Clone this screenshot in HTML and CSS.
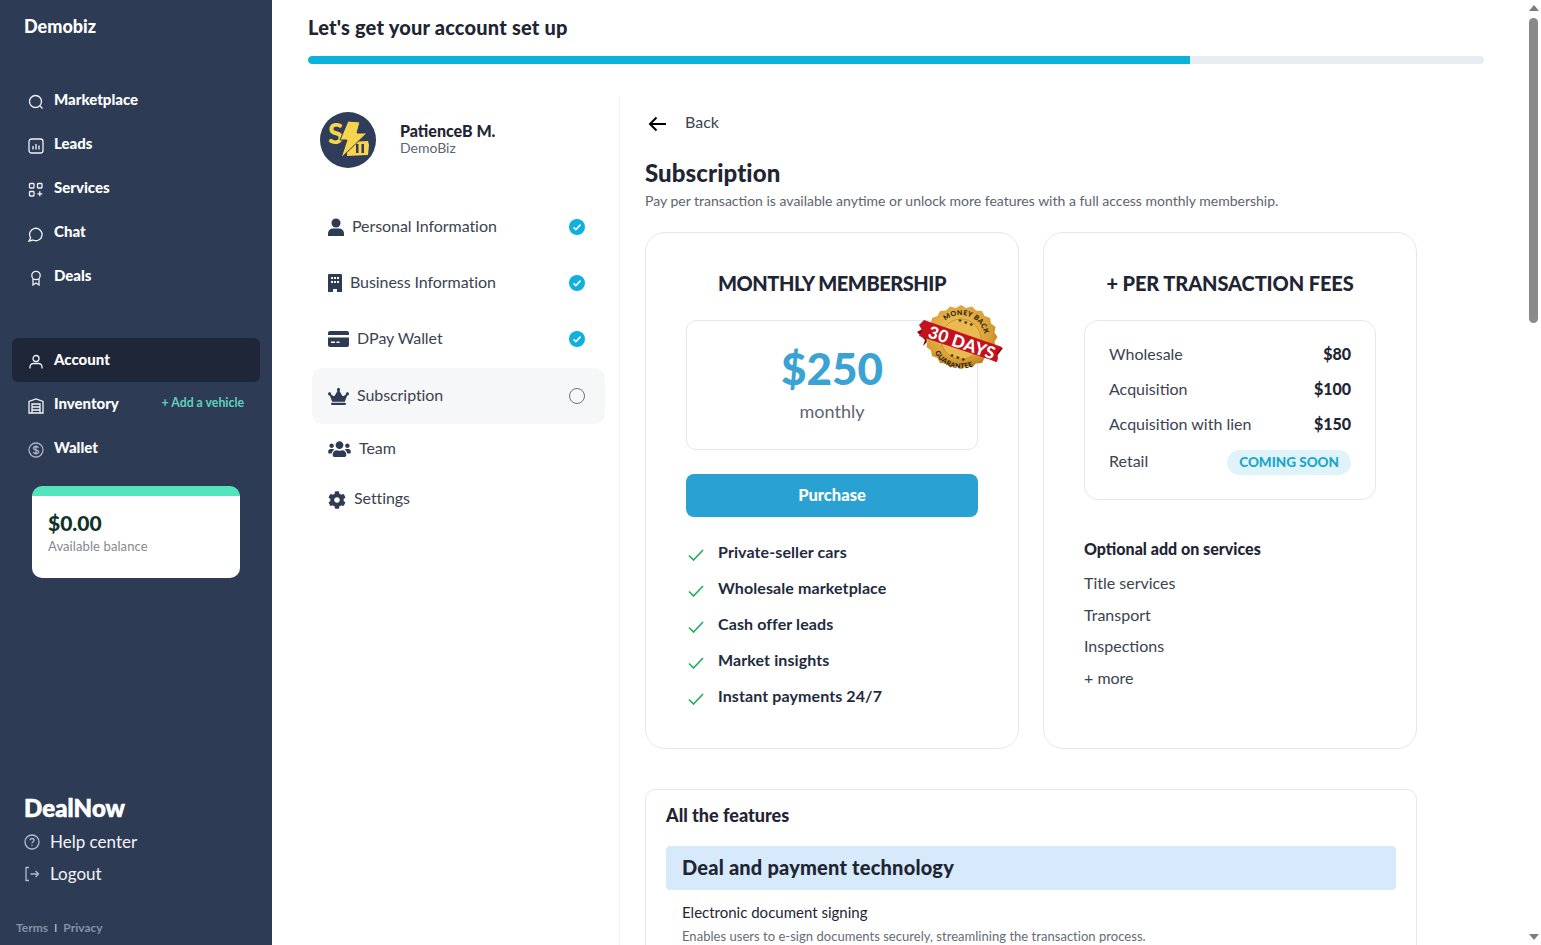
FILE: index.html
```html
<!DOCTYPE html>
<html lang="en">
<head>
<meta charset="utf-8">
<title>Demobiz - Subscription</title>
<link rel="stylesheet" href="styles.css">
</head>
<body>
<div class="app">
  <aside class="sidebar">
    <div class="brand">Demobiz</div>
    <nav class="nav nav-first">
      <a class="nav-row"><svg class="nav-icon" viewBox="0 0 16 16"><circle cx="7.5" cy="7.5" r="6"/><path d="M12 12l2.5 2.5"/></svg><span>Marketplace</span></a>
      <a class="nav-row"><svg class="nav-icon" viewBox="0 0 16 16"><rect x="1" y="1" width="14" height="14" rx="2.5"/><path d="M5 8v3.500M8 6v5.500M11 7.500v4"/></svg><span>Leads</span></a>
      <a class="nav-row"><svg class="nav-icon" viewBox="0 0 16 16"><rect x="1.500" y="1.500" width="4.500" height="4.500" rx=".8"/><rect x="9.500" y="1.500" width="4.500" height="4.500" rx=".8"/><rect x="1.500" y="9.500" width="4.500" height="4.500" rx=".8"/><path d="M11.800 9.300v5M9.300 11.800h5"/></svg><span>Services</span></a>
      <a class="nav-row"><svg class="nav-icon" viewBox="0 0 16 16"><path d="M1 15l1.600-3.200A6.200 6.200 0 1 1 5 14l-4 1z"/></svg><span>Chat</span></a>
      <a class="nav-row"><svg class="nav-icon" viewBox="0 0 16 16"><circle cx="8" cy="5.500" r="4.200"/><path d="M5 9v6l3-2 3 2V9"/></svg><span>Deals</span></a>
    </nav>
    <nav class="nav nav-second">
      <a class="nav-row nav-active"><svg class="nav-icon" viewBox="0 0 16 16"><circle cx="8" cy="4.500" r="3"/><path d="M2 14.500v-1.500a3.500 3.500 0 0 1 3.500-3.500h5A3.500 3.500 0 0 1 14 13v1.500"/></svg><span>Account</span></a>
      <a class="nav-row"><svg class="nav-icon" viewBox="0 0 16 16"><path d="M1 15V3.500L8 1l7 2.500V15zM4 15V6h8v9M4 9h8M4 12h8"/></svg><span>Inventory</span><span class="add-link">+ Add a vehicle</span></a>
      <a class="nav-row"><svg class="nav-icon nav-icon-muted" viewBox="0 0 16 16"><circle cx="8" cy="8" r="7"/><path d="M10.500 5.800C10 4.800 9 4.500 8 4.500c-1.400 0-2.500.7-2.500 1.800 0 2.600 5.200 1 5.200 3.500 0 1.100-1.200 1.800-2.700 1.800-1.200 0-2.300-.5-2.700-1.500M8 3.300v9.400"/></svg><span>Wallet</span></a>
    </nav>
    <section class="balance">
      <div class="balance-value">$0.00</div>
      <div class="balance-label">Available balance</div>
    </section>
    <footer class="side-foot">
      <div class="dealnow">DealNow</div>
      <a class="foot-row"><svg class="foot-icon" viewBox="0 0 16 16"><circle cx="8" cy="8" r="7"/><path d="M6 6.300C6.100 5.100 7 4.500 8 4.500c1.100 0 2 .7 2 1.800 0 1.500-2 1.500-2 3M8 10.800v.9"/></svg><span>Help center</span></a>
      <a class="foot-row"><svg class="foot-icon" viewBox="0 0 16 16"><path d="M5 1.500H2v13h3M6.500 8h8M11.500 5l3 3-3 3"/></svg><span>Logout</span></a>
      <div class="legal"><span>Terms</span><span class="legal-sep">I</span><span>Privacy</span></div>
    </footer>
  </aside>

  <main class="main">
    <h1 class="page-title">Let's get your account set up</h1>
    <div class="progress"><div class="progress-fill" style="width:75%"></div></div>

    <div class="columns">
      <div class="steps-col">
        <div class="profile">
          <svg class="avatar" viewBox="0 0 56 56" width="56" height="56">
            <circle cx="28" cy="28" r="28" fill="#2f3d5a"/>
            <path fill="#f7d44c" d="M27 30l21-1 1 4-1 10-21 1z"/>
            <path fill="#2f3d5a" d="M36 32h2.500v9H36zM41.500 32H44v9h-2.500z"/>
            <text x="8" y="32" class="avatar-s">S</text>
            <path fill="#f7d44c" stroke="#2f3d5a" stroke-width="1" d="M28 9l12 1-3 11h10L21 46l6-18h-7z"/>
          </svg>
          <div class="profile-text">
            <div class="profile-name">PatienceB M.</div>
            <div class="profile-org">DemoBiz</div>
          </div>
        </div>
        <ul class="steps">
          <li class="step">
            <svg class="step-icon" width="16" height="20" viewBox="0 0 16 20"><circle cx="8" cy="6" r="4.500"/><path d="M0 19v-2.500C0 13.500 2.500 11.500 5 11.500h6c2.500 0 5 2 5 5V19z"/></svg>
            <span>Personal Information</span>
            <svg class="step-state" width="16" height="16" viewBox="0 0 16 16"><circle cx="8" cy="8" r="8" fill="#0fb0dc"/><path d="M4.500 8.300l2.400 2.300 4.600-5" fill="none" stroke="#fff" stroke-width="1.600"/></svg>
          </li>
          <li class="step">
            <svg class="step-icon" width="14" height="18" viewBox="0 0 14 18"><path fill-rule="evenodd" d="M1 0h12a1 1 0 0 1 1 1v17H9v-3H5v3H0V1a1 1 0 0 1 1-1zM3 3v2h2V3zM6 3v2h2V3zM9 3v2h2V3zM3 7v2h2V7zM6 7v2h2V7zM9 7v2h2V7z"/></svg>
            <span>Business Information</span>
            <svg class="step-state" width="16" height="16" viewBox="0 0 16 16"><circle cx="8" cy="8" r="8" fill="#0fb0dc"/><path d="M4.500 8.300l2.400 2.300 4.600-5" fill="none" stroke="#fff" stroke-width="1.600"/></svg>
          </li>
          <li class="step">
            <svg class="step-icon" width="21" height="16" viewBox="0 0 21 16"><path fill-rule="evenodd" d="M2 0h17a2 2 0 0 1 2 2v2H0V2a2 2 0 0 1 2-2zM0 6.500h21V14a2 2 0 0 1-2 2H2a2 2 0 0 1-2-2zM3 10.500v1.500h4v-1.500zM8.500 10.500v1.500h3v-1.500z"/></svg>
            <span>DPay Wallet</span>
            <svg class="step-state" width="16" height="16" viewBox="0 0 16 16"><circle cx="8" cy="8" r="8" fill="#0fb0dc"/><path d="M4.500 8.300l2.400 2.300 4.600-5" fill="none" stroke="#fff" stroke-width="1.600"/></svg>
          </li>
          <li class="step step-current">
            <svg class="step-icon" width="21" height="17" viewBox="0 0 640 512"><path d="M528 448H112c-8.800 0-16 7.200-16 16v32c0 8.800 7.200 16 16 16h416c8.800 0 16-7.200 16-16v-32c0-8.800-7.200-16-16-16zm64-320c-26.500 0-48 21.500-48 48 0 7.100 1.600 13.700 4.400 19.800L476 239.200c-15.400 9.200-35.300 4-44.200-11.600L350.300 85C361 76.200 368 63 368 48c0-26.500-21.500-48-48-48s-48 21.500-48 48c0 15 7 28.200 17.700 37l-81.500 142.600c-8.900 15.600-28.900 20.800-44.200 11.600l-72.300-43.400c2.700-6 4.400-12.700 4.400-19.800 0-26.500-21.500-48-48-48S0 149.500 0 176s21.500 48 48 48c2.600 0 5.200-.4 7.700-.8L128 416h384l72.300-192.800c2.500.4 5.100.8 7.700.8 26.500 0 48-21.500 48-48s-21.500-48-48-48z"/></svg>
            <span>Subscription</span>
            <span class="step-open"></span>
          </li>
          <li class="step step-team">
            <svg class="step-icon" width="23" height="18" viewBox="0 0 640 512"><path d="M96 224c35.300 0 64-28.700 64-64s-28.700-64-64-64-64 28.700-64 64 28.700 64 64 64zm448 0c35.300 0 64-28.700 64-64s-28.700-64-64-64-64 28.700-64 64 28.700 64 64 64zm32 32h-64c-17.600 0-33.500 7.100-45.100 18.600 40.300 22.100 68.900 62 75.100 109.400h66c17.700 0 32-14.300 32-32v-32c0-35.300-28.700-64-64-64zm-256 0c61.900 0 112-50.100 112-112S381.900 32 320 32 208 82.100 208 144s50.100 112 112 112zm76.800 32h-8.300c-20.800 10-43.900 16-68.500 16s-47.600-6-68.500-16h-8.300C179.600 288 128 339.600 128 403.200V432c0 26.500 21.500 48 48 48h288c26.500 0 48-21.500 48-48v-28.800c0-63.600-51.600-115.200-115.200-115.200zm-223.700-13.400C161.500 263.100 145.600 256 128 256H64c-35.300 0-64 28.700-64 64v32c0 17.700 14.300 32 32 32h65.900c6.300-47.400 34.900-87.300 75.200-109.400z"/></svg>
            <span>Team</span>
          </li>
          <li class="step step-short">
            <svg class="step-icon" width="18" height="18" viewBox="0 0 512 512"><path d="M487.400 315.700l-42.600-24.600c4.300-23.200 4.300-47 0-70.200l42.600-24.600c4.900-2.800 7.100-8.600 5.500-14-11.100-35.600-30-67.800-54.700-94.600-3.800-4.100-10-5.100-14.800-2.300L380.800 110c-17.900-15.400-38.500-27.300-60.800-35.100V25.800c0-5.600-3.900-10.500-9.400-11.700-36.700-8.200-74.300-7.800-109.200 0-5.500 1.200-9.400 6.100-9.400 11.700V75c-22.200 7.900-42.800 19.800-60.800 35.100L88.700 85.500c-4.900-2.800-11-1.900-14.800 2.300-24.700 26.700-43.600 58.900-54.700 94.600-1.700 5.400.6 11.200 5.500 14L67.300 221c-4.300 23.200-4.300 47 0 70.200l-42.600 24.600c-4.900 2.800-7.100 8.600-5.500 14 11.100 35.600 30 67.800 54.700 94.600 3.800 4.100 10 5.100 14.800 2.300l42.600-24.600c17.900 15.400 38.500 27.300 60.800 35.100v49.200c0 5.600 3.900 10.500 9.400 11.700 36.700 8.200 74.300 7.800 109.200 0 5.500-1.200 9.400-6.100 9.400-11.700v-49.200c22.200-7.900 42.800-19.800 60.800-35.100l42.600 24.600c4.900 2.800 11 1.900 14.800-2.300 24.700-26.700 43.600-58.900 54.700-94.600 1.500-5.500-.7-11.300-5.600-14.100zM256 336c-44.100 0-80-35.900-80-80s35.900-80 80-80 80 35.900 80 80-35.900 80-80 80z"/></svg>
            <span>Settings</span>
          </li>
        </ul>
      </div>

      <div class="content-col">
        <a class="back"><svg class="back-icon" width="18" height="16" viewBox="0 0 18 16"><path d="M18 8H2M8.500 1.500L2 8l6.500 6.500" fill="none" stroke="#000" stroke-width="2"/></svg><span>Back</span></a>
        <h2 class="section-title">Subscription</h2>
        <p class="section-lead">Pay per transaction is available anytime or unlock more features with a full access monthly membership.</p>

        <div class="plans">
          <article class="plan">
            <h3 class="plan-title plan-title-tight">MONTHLY MEMBERSHIP</h3>
            <div class="price-box">
              <div class="price">$250</div>
              <div class="price-period">monthly</div>
              <svg class="guarantee" width="88" height="72" viewBox="0 0 88 72">
                <defs>
                  <path id="arcTop" d="M21 35A24 24 0 0 1 69 35"/>
                  <path id="arcBottom" d="M15.500 35A29.500 29.500 0 0 0 74.500 35"/>
                  <radialGradient id="gold" cx=".45" cy=".4" r=".7"><stop offset="0" stop-color="#f3c964"/><stop offset=".65" stop-color="#d99f35"/><stop offset="1" stop-color="#a06a18"/></radialGradient>
                </defs>
                <path fill="url(#gold)" d="M45 1l5 3 6-1.500 4 4 6 .5 2.500 5 5.500 2 1 5.500 4.500 3.500-1 5.500 3 4.500-3 4.500 1 5.500-4.500 3.500-1 5.500-5.500 2-2.500 5-6 .5-4 4-6-1.500-5 3-5-3-6 1.500-4-4-6-.5-2.500-5-5.500-2-1-5.500-4.500-3.500 1-5.500-3-4.500 3-4.500-1-5.500 4.500-3.500 1-5.500 5.500-2 2.500-5 6-.5 4-4 6 1.500z"/>
                <circle cx="45" cy="35" r="20" fill="#eab94f" stroke="#b07c22" stroke-width=".6"/>
                <text class="seal-text" transform="rotate(19 45 35)"><textPath href="#arcTop" startOffset="50%" text-anchor="middle">MONEY BACK</textPath></text>
                <text class="seal-text" transform="rotate(19 45 35)"><textPath href="#arcBottom" startOffset="50%" text-anchor="middle">GUARANTEE</textPath></text>
                <text class="seal-stars" transform="translate(49 20) rotate(19)" text-anchor="middle">★ ★ ★</text>
                <text class="seal-stars" transform="translate(41 55) rotate(19)" text-anchor="middle">★ ★ ★</text>
                <path fill="#7f0b12" d="M1 28l7-4 3 14-4 4 2-6z"/>
                <path fill="#7f0b12" d="M87 44l-8-2-3 14 4 2 1-6z"/>
                <path fill="#c3121e" d="M8 16L86 43l-5 6 1 5-1 4L3 32l3-6-3-5z"/>
                <text class="seal-days" transform="translate(11 33) rotate(19)">30 DAYS</text>
              </svg>
            </div>
            <button class="purchase" type="button">Purchase</button>
            <ul class="perks">
              <li><svg width="16" height="12" viewBox="0 0 16 12"><path d="M1 6.500L5.500 11 15 1" fill="none" stroke="#27ae60" stroke-width="1.700"/></svg><span>Private-seller cars</span></li>
              <li><svg width="16" height="12" viewBox="0 0 16 12"><path d="M1 6.500L5.500 11 15 1" fill="none" stroke="#27ae60" stroke-width="1.700"/></svg><span>Wholesale marketplace</span></li>
              <li><svg width="16" height="12" viewBox="0 0 16 12"><path d="M1 6.500L5.500 11 15 1" fill="none" stroke="#27ae60" stroke-width="1.700"/></svg><span>Cash offer leads</span></li>
              <li><svg width="16" height="12" viewBox="0 0 16 12"><path d="M1 6.500L5.500 11 15 1" fill="none" stroke="#27ae60" stroke-width="1.700"/></svg><span>Market insights</span></li>
              <li><svg width="16" height="12" viewBox="0 0 16 12"><path d="M1 6.500L5.500 11 15 1" fill="none" stroke="#27ae60" stroke-width="1.700"/></svg><span>Instant payments 24/7</span></li>
            </ul>
          </article>

          <article class="plan">
            <h3 class="plan-title">+ PER TRANSACTION FEES</h3>
            <div class="fee-box">
              <div class="fee"><span>Wholesale</span><b>$80</b></div>
              <div class="fee"><span>Acquisition</span><b>$100</b></div>
              <div class="fee"><span>Acquisition with lien</span><b>$150</b></div>
              <div class="fee fee-retail"><span>Retail</span><em class="pill">COMING SOON</em></div>
            </div>
            <h4 class="addons-title">Optional add on services</h4>
            <ul class="addons">
              <li>Title services</li>
              <li>Transport</li>
              <li>Inspections</li>
              <li>+ more</li>
            </ul>
          </article>
        </div>

        <section class="features">
          <h3 class="features-title">All the features</h3>
          <div class="features-banner">Deal and payment technology</div>
          <div class="feature">
            <div class="feature-name">Electronic document signing</div>
            <div class="feature-desc">Enables users to e-sign documents securely, streamlining the transaction process.</div>
          </div>
        </section>
      </div>
    </div>
  </main>

  <div class="rail" aria-hidden="true">
    <span class="rail-up"></span>
    <span class="rail-thumb"></span>
    <span class="rail-down"></span>
  </div>
</div>
</body>
</html>
```

FILE: styles.css
```css
* { box-sizing: border-box; }
html, body { margin: 0; height: 100%; overflow: hidden; }
body { font-family: "Lato", "Liberation Sans", sans-serif; color: #1f2533; background: #fff; }
h1, h2, h3, h4, p, ul { margin: 0; padding: 0; }
ul { list-style: none; }

.app { display: flex; height: 945px; overflow: hidden; }

/* Sidebar */
.sidebar { width: 272px; flex: none; height: 100%; background: #2e3b55; color: #fff; padding: 16px 12px 0; display: flex; flex-direction: column; }
.brand { font-size: 18px; font-weight: 900; line-height: 20px; padding-left: 12px; }
.nav-first { margin-top: 42px; }
.nav-second { margin-top: 40px; }
.nav-row { height: 44px; display: flex; align-items: center; gap: 10px; padding: 0 16px; font-size: 15px; font-weight: 900; border-radius: 6px; }
.nav-row span { margin-bottom: 2px; }
.nav-active { background: #1e2638; }
.nav-icon { width: 16px; height: 16px; flex: none; margin-top: 4px; fill: none; stroke: #f2f4f7; stroke-width: 1.300; }
.nav-icon-muted { stroke: #aab2c2; }
.nav-row .add-link { margin-left: auto; margin-bottom: 3px; font-size: 12.300px; color: #5fd2bb; font-weight: 700; }
.balance { margin: 16px 20px 0; height: 92px; background: #fff; border-top: 10px solid #52e5bd; border-radius: 10px; padding: 15px 16px 0; }
.balance-value { font-size: 21px; line-height: 24px; font-weight: 900; color: #0f3327; }
.balance-label { font-size: 13px; line-height: 18px; margin-top: 2px; color: #85898f; letter-spacing: .1px; }
.side-foot { margin-top: auto; padding-left: 12px; }
.dealnow { font-size: 24px; line-height: 28px; font-weight: 900; letter-spacing: .1px; -webkit-text-stroke: .6px #fff; }
.foot-row { height: 32px; display: flex; align-items: center; gap: 10px; font-size: 17px; color: #f2f4f7; }
.foot-row span { margin-bottom: 2px; }
.foot-row:first-of-type { margin-top: 4px; }
.foot-icon { width: 16px; height: 16px; flex: none; fill: none; stroke: #b4bbc9; stroke-width: 1.300; }
.legal { margin: 30px 0 0 -8px; padding-bottom: 9px; display: flex; gap: 6px; font-size: 12px; line-height: 16px; font-weight: 700; color: #8791a8; }
.legal-sep { font-weight: 400; color: #c0c6d2; }

/* Main */
.main { flex: 1; min-width: 0; height: 100%; overflow: hidden; padding: 0 41px 30px 36px; }
.page-title { padding-top: 15px; font-size: 20px; line-height: 24px; font-weight: 900; color: #1f2533; letter-spacing: .2px; }
.progress { margin-top: 17px; height: 8px; border-radius: 4px; background: #e8edf1; overflow: hidden; }
.progress-fill { height: 100%; background: #0ab2dc; border-radius: 4px 0 0 4px; }

.columns { margin-top: 32px; display: flex; }
.steps-col { width: 312px; flex: none; border-right: 1px solid #f3f4f6; padding-top: 16px; }
.profile { display: flex; align-items: center; gap: 24px; padding-left: 12px; }
.avatar { flex: none; display: block; }
.avatar-s { font-size: 28px; font-weight: 900; fill: #f7d44c; font-family: "Lato", sans-serif; }
.profile-text { margin-bottom: 3px; }
.profile-name { font-size: 16px; line-height: 19px; font-weight: 900; color: #1f2533; }
.profile-org { font-size: 14px; line-height: 16px; color: #5d6470; }
.steps { margin: 31px 0 0 4px; width: 293px; }
.step { height: 56px; display: flex; align-items: center; gap: 8px; padding: 0 20px 0 16px; font-size: 16px; letter-spacing: -.07px; color: #3b4350; border-radius: 10px; }
.step span { margin-bottom: 4px; }
.step-short { height: 51px; }
.step-team { height: 50px; }
.step-current { margin-top: 1px; background: #f6f7f9; }
.step-icon { flex: none; fill: #2e3b55; }
.step-state { margin-left: auto; flex: none; }
.step .step-open { margin: 0 0 0 auto; width: 16px; height: 16px; border: 1px solid #6b7280; border-radius: 50%; }

.content-col { width: 772px; margin-left: 25px; padding-top: 16px; flex: none; }
.back { height: 22px; display: flex; align-items: center; gap: 19px; padding-left: 3px; font-size: 16px; color: #3b4350; }
.back span { margin-bottom: 3px; }
.back-icon { margin-top: 2px; }
.section-title { margin-top: 24px; font-size: 24px; line-height: 30px; font-weight: 900; color: #1f2533; letter-spacing: .1px; }
.section-lead { margin-top: 3px; font-size: 14px; line-height: 20px; color: #5d6470; }

.plans { margin-top: 21px; display: grid; grid-template-columns: 374px 374px; gap: 24px; }
.plan { height: 517px; border: 1px solid #e5e7eb; border-radius: 20px; padding: 36px 40px 0; }
.plan-title { font-size: 20px; line-height: 28px; font-weight: 900; text-align: center; color: #1f2533; letter-spacing: -.1px; }
.plan-title-tight { letter-spacing: -.45px; }
.price-box { position: relative; margin-top: 23px; height: 130px; border: 1px solid #e5e7eb; border-radius: 10px; text-align: center; padding-top: 22px; }
.price { font-size: 44px; line-height: 50px; font-weight: 900; color: #3ba3d3; }
.price-period { margin-top: 5px; font-size: 18px; line-height: 26px; color: #5d6470; }
.guarantee { position: absolute; top: -17px; right: -27px; }
.seal-text { font-size: 7px; font-weight: 900; fill: #2a1c08; letter-spacing: .3px; }
.seal-stars { font-size: 5px; fill: #2a1c08; font-family: "DejaVu Sans", sans-serif; }
.seal-days { font-size: 17px; font-weight: 900; fill: #fff; letter-spacing: .4px; }
.purchase { margin-top: 24px; display: block; width: 100%; height: 43px; border: 0; padding: 0 0 2px; border-radius: 8px; background: #2aa1d3; color: #fff; font: 900 16.500px "Lato", sans-serif; }
.perks { margin-top: 18px; }
.perks li { height: 36px; display: flex; align-items: center; gap: 14px; padding-left: 2px; font-size: 16px; font-weight: 700; color: #1f2b3d; letter-spacing: .1px; }
.perks svg { flex: none; margin-top: 3px; }
.perks span { margin-bottom: 4px; }

.fee-box { margin-top: 23px; height: 180px; border: 1px solid #e5e7eb; border-radius: 14px; padding: 16px 24px 0; }
.fee { height: 35px; display: flex; align-items: center; justify-content: space-between; font-size: 16px; color: #3b4350; }
.fee span, .fee b { margin-bottom: 3px; }
.fee b { font-weight: 900; color: #1f2533; }
.fee-retail { height: 36px; margin-top: 2px; }
.pill { height: 25px; padding: 0 12px; display: flex; align-items: center; border-radius: 13px; background: #e0f3fa; color: #1aa7cc; font-size: 13.500px; font-weight: 900; font-style: normal; }
.addons-title { margin-top: 38px; font-size: 16px; line-height: 22px; font-weight: 900; color: #1f2533; }
.addons { margin-top: 7px; }
.addons li { height: 31.500px; display: flex; align-items: center; font-size: 16px; color: #3b4350; }

.features { margin-top: 40px; min-height: 400px; border: 1px solid #e5e7eb; border-radius: 10px; padding: 13px 20px 0; }
.features-title { font-size: 18px; line-height: 24px; font-weight: 900; color: #1f2533; }
.features-banner { margin-top: 19px; height: 44px; display: flex; align-items: center; padding: 0 0 2px 16px; background: #d6eafc; border-radius: 4px; font-size: 20px; letter-spacing: .2px; font-weight: 900; color: #1f2533; }
.feature { padding-left: 16px; margin-top: 11px; }
.feature-name { font-size: 15px; line-height: 22px; color: #1f2533; }
.feature-desc { margin-top: 3px; font-size: 13px; line-height: 20px; color: #666c75; letter-spacing: .03px; }

/* Window scrollbar, drawn because the page below the fold is not reproduced */
.rail { width: 16px; flex: none; height: 100%; display: flex; flex-direction: column; align-items: center; padding: 5px 3px 0 4px; background: #fff; }
.rail-up { width: 0; height: 0; border-left: 5px solid transparent; border-right: 5px solid transparent; border-bottom: 6px solid #7c7c7c; }
.rail-thumb { margin-top: 7px; width: 9px; height: 305px; border-radius: 5px; background: #8a8a8a; }
.rail-down { margin-top: auto; margin-bottom: 5px; width: 0; height: 0; border-left: 5px solid transparent; border-right: 5px solid transparent; border-top: 6px solid #7c7c7c; }
```
